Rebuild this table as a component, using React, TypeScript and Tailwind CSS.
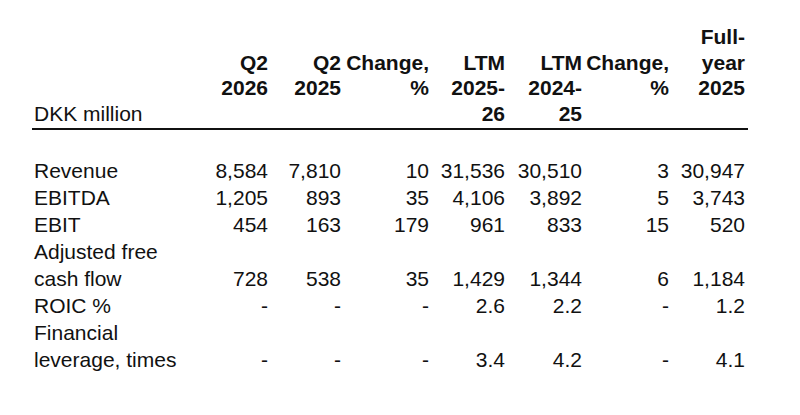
import React from "react";

type Row = { label: React.ReactNode; values: string[] };

const rows: Row[] = [
  { label: "Revenue", values: ["8,584", "7,810", "10", "31,536", "30,510", "3", "30,947"] },
  { label: "EBITDA", values: ["1,205", "893", "35", "4,106", "3,892", "5", "3,743"] },
  { label: "EBIT", values: ["454", "163", "179", "961", "833", "15", "520"] },
  {
    label: (
      <>
        Adjusted free
        <br />
        cash flow
      </>
    ),
    values: ["728", "538", "35", "1,429", "1,344", "6", "1,184"],
  },
  { label: "ROIC %", values: ["-", "-", "-", "2.6", "2.2", "-", "1.2"] },
  {
    label: (
      <>
        Financial
        <br />
        leverage, times
      </>
    ),
    values: ["-", "-", "-", "3.4", "4.2", "-", "4.1"],
  },
];

const headers: string[][] = [
  ["", "Q2", "2026", ""],
  ["", "Q2", "2025", ""],
  ["", "Change,", "%", ""],
  ["", "LTM", "2025-", "26"],
  ["", "LTM", "2024-", "25"],
  ["", "Change,", "%", ""],
  ["Full-", "year", "2025", ""],
];

function Lines({ lines }: { lines: string[] }) {
  return (
    <>
      {lines.map((l, k) => (
        <div key={k} className="h-[25.5px] leading-[25.5px]">
          {l === "" ? "\u00a0" : l}
        </div>
      ))}
    </>
  );
}

export default function App() {
  return (
    <div
      className="w-[800px] h-[415px] bg-white text-[#111111] overflow-hidden pt-[24px] pl-[32px]"
      style={{ fontFamily: '"Liberation Sans", Arial, sans-serif' }}
    >
      <table className="table-fixed border-collapse w-[716px] text-[21px]">
        <colgroup>
          <col className="w-[163px]" />
          <col className="w-[76px]" />
          <col className="w-[73px]" />
          <col className="w-[88px]" />
          <col className="w-[76px]" />
          <col className="w-[77px]" />
          <col className="w-[87px]" />
          <col className="w-[76px]" />
        </colgroup>
        <thead>
          <tr className="border-b-2 border-[#111111]">
            <th className="text-left font-normal align-top pl-[2px] pr-0 pt-0 pb-[1.5px] whitespace-nowrap">
              <Lines lines={["", "", "", "DKK million"]} />
            </th>
            {headers.map((h, i) => (
              <th
                key={i}
                className="text-right font-bold align-top pr-[3px] pl-0 pt-0 pb-[1.5px] whitespace-nowrap"
              >
                <Lines lines={h} />
              </th>
            ))}
          </tr>
        </thead>
        <tbody>
          <tr>
            <td colSpan={8} className="h-[28px] p-0"></td>
          </tr>
          {rows.map((r, i) => (
            <tr key={i}>
              <td className="text-left align-bottom leading-[27px] pl-[2px] pr-0 py-0 whitespace-nowrap">
                {r.label}
              </td>
              {r.values.map((v, j) => (
                <td
                  key={j}
                  className="text-right align-bottom leading-[27px] pr-[3px] pl-0 py-0 whitespace-nowrap"
                >
                  {v}
                </td>
              ))}
            </tr>
          ))}
        </tbody>
      </table>
    </div>
  );
}
